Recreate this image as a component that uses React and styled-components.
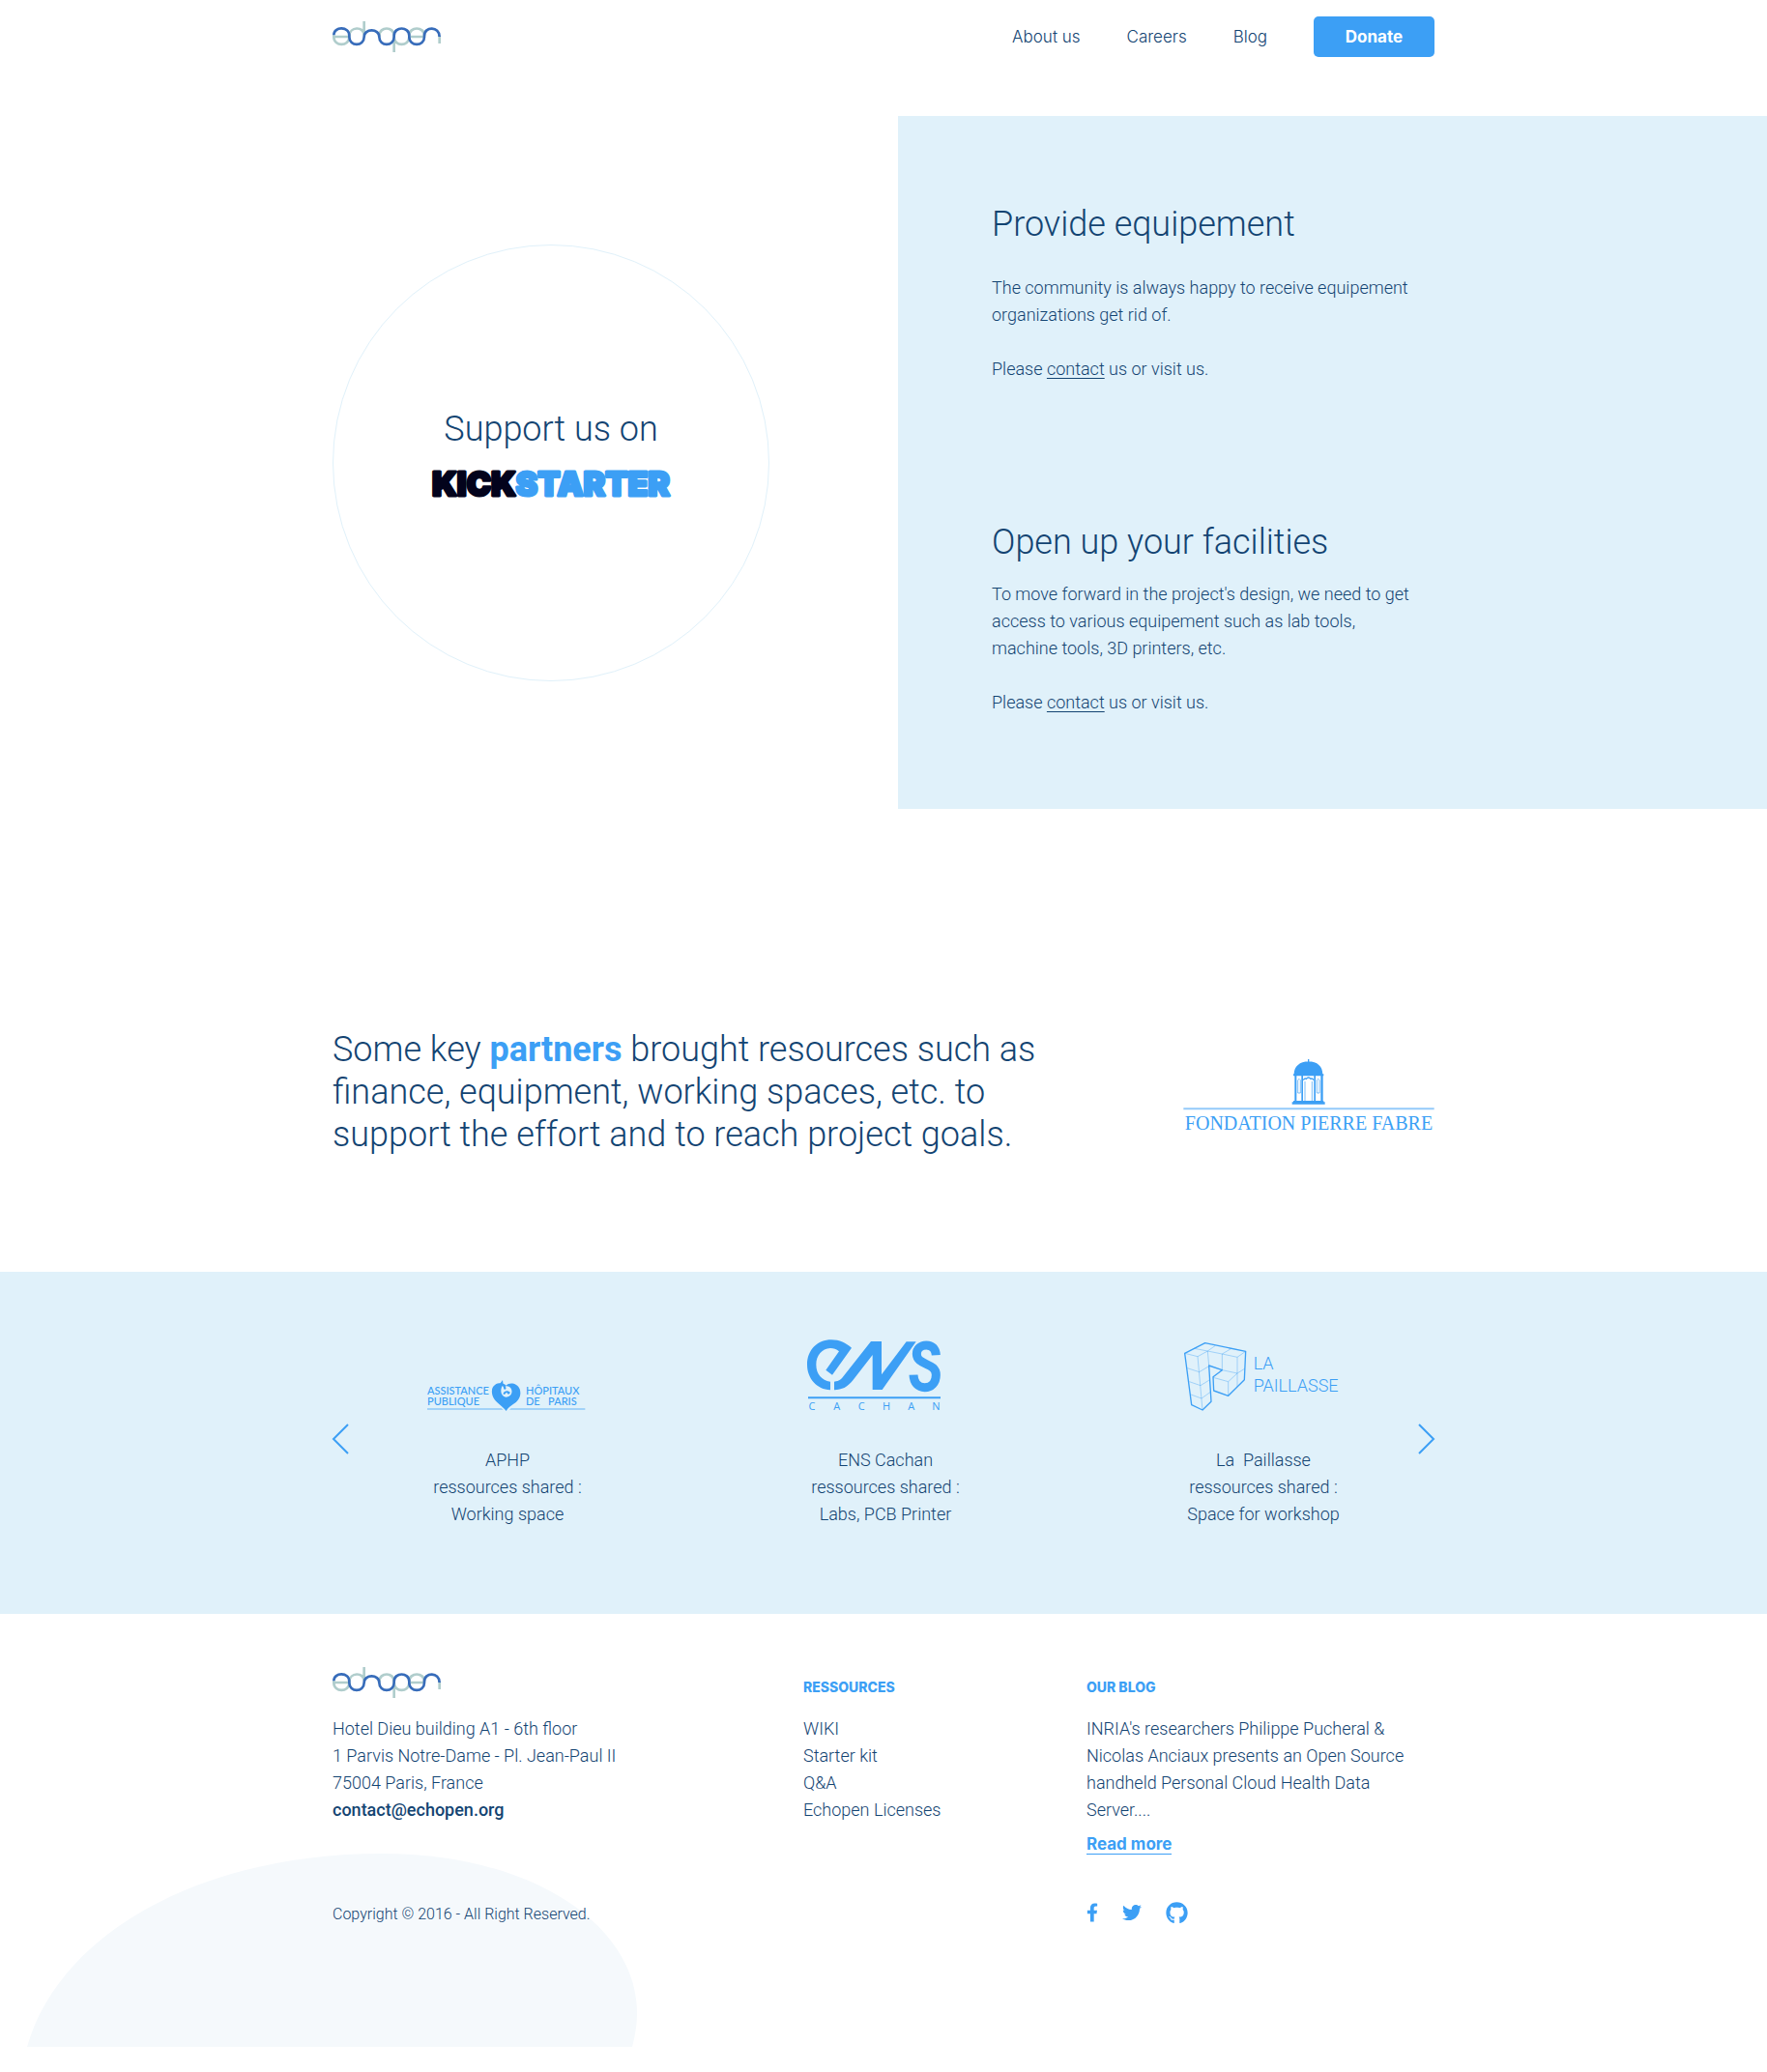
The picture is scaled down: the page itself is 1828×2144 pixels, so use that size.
import React from "react";
import styled, { createGlobalStyle } from "styled-components";
import { FaFacebookF, FaTwitter, FaGithub } from "react-icons/fa";

const navy = "#134472";
const blue = "#3c9ff5";
const pale = "#e0f1fa";
const display = `Inter, "Open Sans", sans-serif`;

const GlobalStyle = createGlobalStyle`
  *, *::before, *::after { box-sizing: border-box; }
  body {
    margin: 0;
    background: #fff;
    color: ${navy};
    font-family: Roboto, "Liberation Sans", sans-serif;
    font-size: 18px;
    font-weight: 300;
    line-height: 28px;
  }
  h1, h2, h3, p, ul { margin: 0; padding: 0; }
  ul { list-style: none; }
  a { color: inherit; text-decoration: none; }
  svg { display: block; overflow: visible; }
`;

const Container = styled.div`
  width: 100%;
  max-width: 1140px;
  margin: 0 auto;
  @media (max-width: 1160px) {
    padding: 0 24px;
  }
`;

/* Header */

const Header = styled.header`
  padding: 17px 0 61px;
`;

const HeaderRow = styled(Container)`
  display: flex;
  align-items: center;
  justify-content: space-between;
`;

const Nav = styled.nav`
  display: flex;
  align-items: center;
  gap: 48px;
`;

const NavLink = styled.a`
  font-family: ${display};
  font-size: 17px;
  line-height: 24px;
`;

const DonateButton = styled.button`
  width: 125px;
  height: 42px;
  padding: 0;
  border: 0;
  border-radius: 5px;
  background: ${blue};
  color: #fff;
  font-family: ${display};
  font-size: 17px;
  font-weight: 700;
  cursor: pointer;
`;

/* Hero */

const Hero = styled.section`
  display: grid;
  grid-template-columns: minmax(24px, 1fr) 585px 555px minmax(24px, 1fr);
  align-items: center;
  @media (max-width: 1160px) {
    display: block;
  }
`;

const Circle = styled.a`
  grid-column: 2;
  display: flex;
  flex-direction: column;
  align-items: center;
  justify-content: center;
  gap: 13px;
  width: 452px;
  height: 452px;
  padding-bottom: 12px;
  border: 1px solid ${pale};
  border-radius: 50%;
  @media (max-width: 1160px) {
    margin: 0 auto 48px;
  }
`;

const Title = styled.h2`
  font-size: 36px;
  font-weight: 300;
  line-height: 44px;
`;

const Panel = styled.div`
  grid-column: 3 / -1;
  display: flex;
  flex-direction: column;
  gap: 143px;
  padding: 90px 24px 96px 97px;
  background: ${pale};
`;

const Offer = styled.article`
  display: flex;
  flex-direction: column;
  gap: ${(p) => p.$gap}px;
  max-width: 440px;
`;

const Copy = styled.div`
  display: flex;
  flex-direction: column;
  gap: 28px;
`;

const ContactLink = styled.a`
  text-decoration: underline;
  text-decoration-thickness: 1px;
  text-underline-offset: 3px;
  text-decoration-skip-ink: none;
`;

/* Partners */

const Partners = styled.section`
  padding: 227px 0 120px;
`;

const PartnersRow = styled(Container)`
  display: flex;
  align-items: center;
  justify-content: space-between;
  gap: 24px;
`;

const Statement = styled(Title)`
  max-width: 740px;
`;

const Highlight = styled.strong`
  color: ${blue};
  font-weight: 700;
`;

const Sponsor = styled.div`
  flex: none;
  padding-top: 5px;
`;

/* Carousel */

const Band = styled.section`
  padding: 70px 0 89px;
  background: ${pale};
`;

const Carousel = styled(Container)`
  display: flex;
  align-items: center;
`;

const ArrowButton = styled.button`
  flex: none;
  margin-top: 10px;
  padding: 0;
  border: 0;
  background: none;
  color: ${blue};
  cursor: pointer;
`;

const Slides = styled.ul`
  flex: 1;
  display: flex;
  justify-content: space-between;
  padding: 0 77px 0 81px;
`;

const Slide = styled.li`
  display: flex;
  flex-direction: column;
  gap: 37px;
  width: 166px;
  text-align: center;
`;

const SlideLogo = styled.div`
  display: flex;
  align-items: flex-end;
  height: 74px;
`;

const SlideText = styled.p`
  white-space: pre-line;
`;

/* Footer */

const Footer = styled.footer`
  position: relative;
  overflow: hidden;
  padding: 55px 0 151px;
`;

const Blob = styled.svg`
  position: absolute;
  left: calc(50% - 886px);
  bottom: 26px;
`;

const FooterGrid = styled(Container)`
  position: relative;
  display: grid;
  grid-template-columns: 487fr 293fr 360fr;
  row-gap: 47px;
`;

const ColumnHead = styled.div`
  height: 50px;
  padding-top: ${(p) => p.$top || 0}px;
`;

const ColumnTitle = styled.h3`
  color: ${blue};
  font-family: ${display};
  font-size: 14px;
  font-weight: 800;
  line-height: 20px;
`;

const Mail = styled.a`
  font-weight: 500;
`;

const ReadMore = styled.a`
  display: inline-block;
  margin-top: 11px;
  border-bottom: 1px solid ${blue};
  color: ${blue};
  font-family: ${display};
  font-size: 17px;
  font-weight: 700;
  line-height: 20px;
`;

const Copyright = styled.p`
  grid-column: span 2;
  font-size: 16px;
  line-height: 24px;
`;

const Socials = styled.div`
  display: flex;
  align-items: center;
  gap: 25px;
  height: 20px;
  color: ${blue};
`;

const FacebookIcon = styled(FaFacebookF)`
  width: 12px;
  height: 20px;
`;

/* Logos */

const EchopenLogo = () => (
  <svg width="112" height="32" viewBox="42 69 336 96" fill="none" strokeWidth="8" role="img" aria-label="echopen">
    <g stroke="#b0cdcc">
      <path d="M46 112V118C46 148 94 148 94 118M46 117H94" />
      <path d="M94 116C94 84 140 84 140 112M140 69V106" />
      <path d="M187 118V114C187 84 233 84 233 114" />
      <path d="M233 112V165M233 118C233 148 280 148 280 118" />
      <path d="M280 114C280 84 327 84 327 114M283 117H325" />
      <path d="M374 114V138" />
    </g>
    <path
      stroke="#376cba"
      d="M46 112C46 84 94 84 94 114V118C94 148 140 148 140 118C140 90 187 90 187 118C187 148 233 148 233 118V114C233 84 280 84 280 114V118C280 148 327 148 327 118V114C327 84 374 84 374 117"
    />
  </svg>
);

const Wordmark = styled.text`
  font-family: Inter, sans-serif;
  font-size: 34px;
  font-weight: 900;
  stroke-width: 3px;
  stroke-linejoin: round;
`;

const KickstarterLogo = () => (
  <svg width="246" height="44" viewBox="0 0 246 44" role="img" aria-label="Kickstarter">
    <Wordmark x="123" y="34" textAnchor="middle">
      <tspan fill="#03031c" stroke="#03031c">KICK</tspan>
      <tspan fill={blue} stroke={blue}>STARTER</tspan>
    </Wordmark>
  </svg>
);

const FabreText = styled.text`
  font-family: "Liberation Serif", serif;
  font-size: 60px;
`;

const FabreLogo = () => (
  <svg width="260" height="74" viewBox="44 47 780 222" fill={blue} role="img" aria-label="Fondation Pierre Fabre">
    <path d="M388 94C388 70 406 54 433 54S477 70 477 94ZM431 47H435V56H431ZM386 93H480V99H386ZM386 176H480V181H386ZM382 180H484V187H382Z" />
    <path d="M390 98H396V178H390ZM411 98H416V178H411ZM450 98H455V178H450ZM471 98H478V178H471Z" />
    <path
      fill="none"
      stroke={blue}
      strokeWidth="2"
      d="M400 152V112Q404 104 408 112V152ZM459 152V112Q463 104 467 112V152ZM422 176V116M444 176V116"
    />
    <path fill="none" stroke={blue} strokeWidth="4" d="M417 112Q421 105 426 108Q433 100 440 108Q445 105 449 112" />
    <path opacity="0.55" d="M45 198H823V204H45Z" />
    <FabreText x="434" y="265" textAnchor="middle">FONDATION PIERRE FABRE</FabreText>
  </svg>
);

const AphpText = styled.text`
  font-family: Lato, sans-serif;
  font-size: 33px;
  font-weight: 500;
`;

const AphpLogo = () => (
  <svg width="164" height="32" viewBox="64 175 492 96" fill={blue} role="img" aria-label="Assistance Publique Hôpitaux de Paris">
    <AphpText x="64" y="220">ASSISTANCE</AphpText>
    <AphpText x="64" y="254">PUBLIQUE</AphpText>
    <AphpText x="370" y="220">HÔPITAUX</AphpText>
    <AphpText x="370" y="254">{"DE\u00a0\u00a0\u00a0PARIS"}</AphpText>
    <path d="M309 271C300 258 282 248 272 234C256 208 268 187 287 185C298 184 305 188 309 192C318 181 344 184 351 203C358 225 346 240 334 248C324 255 314 262 309 271Z" />
    <path d="M287 190L298 175L300 190Z" />
    <path fill={pale} d="M297 193C289 207 293 227 309 228C325 227 331 211 323 200C319 194 311 192 306 195C311 200 308 206 303 204C300 201 302 196 297 193Z" />
    <path d="M299 218C303 208 314 206 322 214L316 220L310 213L304 220Z" />
    <path opacity="0.5" d="M64 263H294L300 267H64ZM324 263H554V267H319Z" />
  </svg>
);

const CachanText = styled.text`
  font-family: "Open Sans", sans-serif;
  font-size: 33px;
  font-weight: 500;
`;

const EnsLogo = () => (
  <svg width="140" height="74" viewBox="36 47 420 222" fill={blue} role="img" aria-label="ENS Cachan">
    <path d="M114 204C72 202 42 168 42 125C42 79 75 48 117 48C143 48 162 58 180 73L120 157L100 142L141 84C133 76 124 74 114 74C87 76 70 97 70 125C70 154 87 174 114 178Z" />
    <path d="M126 204V178C143 177 149 169 159 156L240 53H273V156L350 54H380L275 203H245V95L184 174C166 196 151 203 126 204Z" />
    <path
      fill="none"
      stroke={blue}
      strokeWidth="27"
      d="M442 96C441 75 429 65 412 65C394 65 382 77 382 92C383 129 442 118 442 157C442 182 426 196 407 196C387 196 373 182 372 157"
    />
    <path d="M45 225H456V231H45Z" />
    {["C", "A", "C", "H", "A", "N"].map((letter, i) => (
      <CachanText key={i} x={57 + i * 77} y="267" textAnchor="middle">
        {letter}
      </CachanText>
    ))}
  </svg>
);

const PaillasseText = styled.text`
  font-family: Roboto, sans-serif;
  font-size: 54px;
  font-weight: 300;
`;

const PaillasseLogo = () => (
  <svg width="160" height="71" viewBox="72 56 480 213" fill="none" stroke={blue} role="img" aria-label="La Paillasse">
    <path
      strokeWidth="2"
      opacity="0.6"
      d="M77 90L117 100L148 83L193 92L240 102L266 84M107 75L148 83L152 128M172 66L148 83M222 75L193 92V142M240 102V152M117 100L132 266M85 136L122 148L152 130M91 178L126 190L155 172M96 218L129 230L157 210M165 165L212 178L240 152L193 142M212 178V222M240 152L264 137M240 152V194"
    />
    <path
      strokeWidth="4"
      strokeLinejoin="round"
      d="M77 90L140 58L266 84L262 172L212 222L167 206L165 163L193 142L152 128L159 240L132 266L98 250Z"
    />
    <g fill={blue} stroke="none">
      <PaillasseText x="290" y="140">LA</PaillasseText>
      <PaillasseText x="290" y="210">PAILLASSE</PaillasseText>
    </g>
  </svg>
);

const Arrow = ({ points }) => (
  <svg width="17" height="32" viewBox="0 0 17 32" fill="none" stroke="currentColor" strokeWidth="2">
    <polyline points={points} />
  </svg>
);

const partners = [
  { logo: <AphpLogo />, text: "APHP\nressources shared :\nWorking space" },
  { logo: <EnsLogo />, text: "ENS Cachan\nressources shared :\nLabs, PCB Printer" },
  { logo: <PaillasseLogo />, text: "La \u00a0Paillasse\nressources shared :\nSpace for workshop" },
];

const ContactLine = () => (
  <p>
    Please <ContactLink href="#contact">contact</ContactLink> us or visit us.
  </p>
);

export default function App() {
  return (
    <>
      <GlobalStyle />
      <Header>
        <HeaderRow>
          <a href="#home">
            <EchopenLogo />
          </a>
          <Nav>
            <NavLink href="#about">About us</NavLink>
            <NavLink href="#careers">Careers</NavLink>
            <NavLink href="#blog">Blog</NavLink>
            <DonateButton type="button">Donate</DonateButton>
          </Nav>
        </HeaderRow>
      </Header>
      <main>
        <Hero>
          <Circle href="#kickstarter">
            <Title>Support us on</Title>
            <KickstarterLogo />
          </Circle>
          <Panel>
            <Offer $gap={30}>
              <Title>Provide equipement</Title>
              <Copy>
                <p>The community is always happy to receive equipement organizations get rid of.</p>
                <ContactLine />
              </Copy>
            </Offer>
            <Offer $gap={18}>
              <Title>Open up your facilities</Title>
              <Copy>
                <p>
                  To move forward in the project's design, we need to get access to various equipement such as lab
                  tools, machine tools, 3D printers, etc.
                </p>
                <ContactLine />
              </Copy>
            </Offer>
          </Panel>
        </Hero>
        <Partners>
          <PartnersRow>
            <Statement>
              Some key <Highlight>partners</Highlight> brought resources such as finance, equipment, working spaces,
              etc. to support the effort and to reach project goals.
            </Statement>
            <Sponsor>
              <FabreLogo />
            </Sponsor>
          </PartnersRow>
        </Partners>
        <Band>
          <Carousel>
            <ArrowButton type="button" aria-label="Previous partners">
              <Arrow points="16,1 1,16 16,31" />
            </ArrowButton>
            <Slides>
              {partners.map((partner, i) => (
                <Slide key={i}>
                  <SlideLogo>{partner.logo}</SlideLogo>
                  <SlideText>{partner.text}</SlideText>
                </Slide>
              ))}
            </Slides>
            <ArrowButton type="button" aria-label="Next partners">
              <Arrow points="1,1 16,16 1,31" />
            </ArrowButton>
          </Carousel>
        </Band>
      </main>
      <Footer>
        <Blob width="631" height="200" viewBox="28 1918 631 200" aria-hidden="true">
          <path
            fill="#f5f9fc"
            d="M28 2118C60 2003 205 1918 395 1918C555 1918 659 1995 659 2083Q659 2100 654 2118Z"
          />
        </Blob>
        <FooterGrid>
          <div>
            <ColumnHead>
              <EchopenLogo />
            </ColumnHead>
            <p>Hotel Dieu building A1 - 6th floor</p>
            <p>1 Parvis Notre-Dame - Pl. Jean-Paul II</p>
            <p>75004 Paris, France</p>
            <Mail href="mailto:contact@echopen.org">contact@echopen.org</Mail>
          </div>
          <div>
            <ColumnHead $top={11}>
              <ColumnTitle>RESSOURCES</ColumnTitle>
            </ColumnHead>
            <ul>
              <li><a href="#wiki">WIKI</a></li>
              <li><a href="#starter">Starter kit</a></li>
              <li><a href="#qa">Q&amp;A</a></li>
              <li><a href="#licenses">Echopen Licenses</a></li>
            </ul>
          </div>
          <div>
            <ColumnHead $top={11}>
              <ColumnTitle>OUR BLOG</ColumnTitle>
            </ColumnHead>
            <p>
              INRIA's researchers Philippe Pucheral &amp; Nicolas Anciaux presents an Open Source handheld Personal
              Cloud Health Data Server....
            </p>
            <ReadMore href="#read-more">Read more</ReadMore>
          </div>
          <Copyright>Copyright © 2016 - All Right Reserved.</Copyright>
          <Socials>
            <a href="#facebook" aria-label="Facebook"><FacebookIcon /></a>
            <a href="#twitter" aria-label="Twitter"><FaTwitter size={20} /></a>
            <a href="#github" aria-label="GitHub"><FaGithub size={23} /></a>
          </Socials>
        </FooterGrid>
      </Footer>
    </>
  );
}
